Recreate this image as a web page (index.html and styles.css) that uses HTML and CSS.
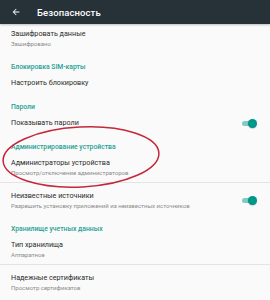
FILE: index.html
```html
<!DOCTYPE html>
<html lang="ru">
<head>
<meta charset="utf-8">
<link rel="stylesheet" href="styles.css">
</head>
<body>
<div class="screen">
  <header class="toolbar">
    <svg class="back" width="10" height="10" viewBox="0 0 24 24"><path d="M20 11H7.83l5.59-5.59L12 4l-8 8 8 8 1.41-1.41L7.83 13H20v-2z" fill="#fff"/></svg>
    <span class="title">Безопасность</span>
  </header>
  <main class="list">
    <div class="item">
      <div class="t">Зашифровать данные</div>
      <div class="s">Зашифровано</div>
    </div>
    <div class="cat">Блокировка SIM-карты</div>
    <div class="item">
      <div class="t">Настроить блокировку</div>
    </div>
    <div class="cat">Пароли</div>
    <div class="item row">
      <div class="t">Показывать пароли</div>
      <span class="switch"></span>
    </div>
    <div class="cat">Администрирование устройства</div>
    <div class="item">
      <div class="t">Администраторы устройства</div>
      <div class="s">Просмотр/отключение администраторов</div>
    </div>
    <div class="divider"></div>
    <div class="item row">
      <div class="texts">
        <div class="t">Неизвестные источники</div>
        <div class="s">Разрешить установку приложений из неизвестных источников</div>
      </div>
      <span class="switch"></span>
    </div>
    <div class="cat">Хранилище учетных данных</div>
    <div class="item">
      <div class="t">Тип хранилища</div>
      <div class="s">Аппаратное</div>
    </div>
    <div class="divider"></div>
    <div class="item">
      <div class="t">Надежные сертификаты</div>
      <div class="s">Просмотр сертификатов</div>
    </div>
  </main>
  <svg class="mark" width="270" height="300" viewBox="0 0 270 300">
    <ellipse cx="81" cy="157" rx="78" ry="30" fill="none" stroke="#c4283a" stroke-width="1.5" transform="rotate(-3 81 157)"/>
  </svg>
</div>
</body>
</html>
```
FILE: styles.css
```css
* { box-sizing: border-box; }
html, body { margin: 0; padding: 0; }
body {
  width: 270px;
  height: 300px;
  overflow: hidden;
  background: #fafafa;
  font-family: Roboto, "Noto Sans", "Liberation Sans", sans-serif;
}
.screen { position: relative; width: 270px; height: 300px; }
.toolbar {
  height: 24px;
  background: #263238;
  display: flex;
  align-items: center;
  padding-left: 11px;
  box-shadow: 0 1px 2px rgba(0,0,0,0.25);
}
.back { flex: none; }
.title {
  margin-left: 16px;
  color: #fff;
  font-size: 9.5px;
  font-weight: 500;
  letter-spacing: 0.1px;
}
.list { display: flex; flex-direction: column; }
.item {
  padding: 5px 14px 5px 11px;
}
.row { display: flex; align-items: center; justify-content: space-between; }
.t {
  font-size: 7.2px;
  line-height: 10px;
  color: #2a2a2a;
  white-space: nowrap;
}
.s {
  font-size: 6px;
  line-height: 9px;
  color: #8a8a8a;
  white-space: nowrap;
}
.cat {
  padding: 9px 11px 1px;
  font-size: 6.8px;
  line-height: 10px;
  font-weight: 500;
  color: #26a093;
}
.divider {
  height: 1px;
  background: #e4e4e4;
  margin-bottom: 3px;
}
.switch {
  position: relative;
  width: 14px;
  height: 5px;
  border-radius: 3px;
  background: #80cbc4;
  flex: none;
}
.switch::after {
  content: "";
  position: absolute;
  right: -1px;
  top: -2px;
  width: 9px;
  height: 9px;
  border-radius: 50%;
  background: #009688;
  box-shadow: 0 0.5px 1px rgba(0,0,0,0.3);
}
.mark { position: absolute; left: 0; top: 0; pointer-events: none; }
```
